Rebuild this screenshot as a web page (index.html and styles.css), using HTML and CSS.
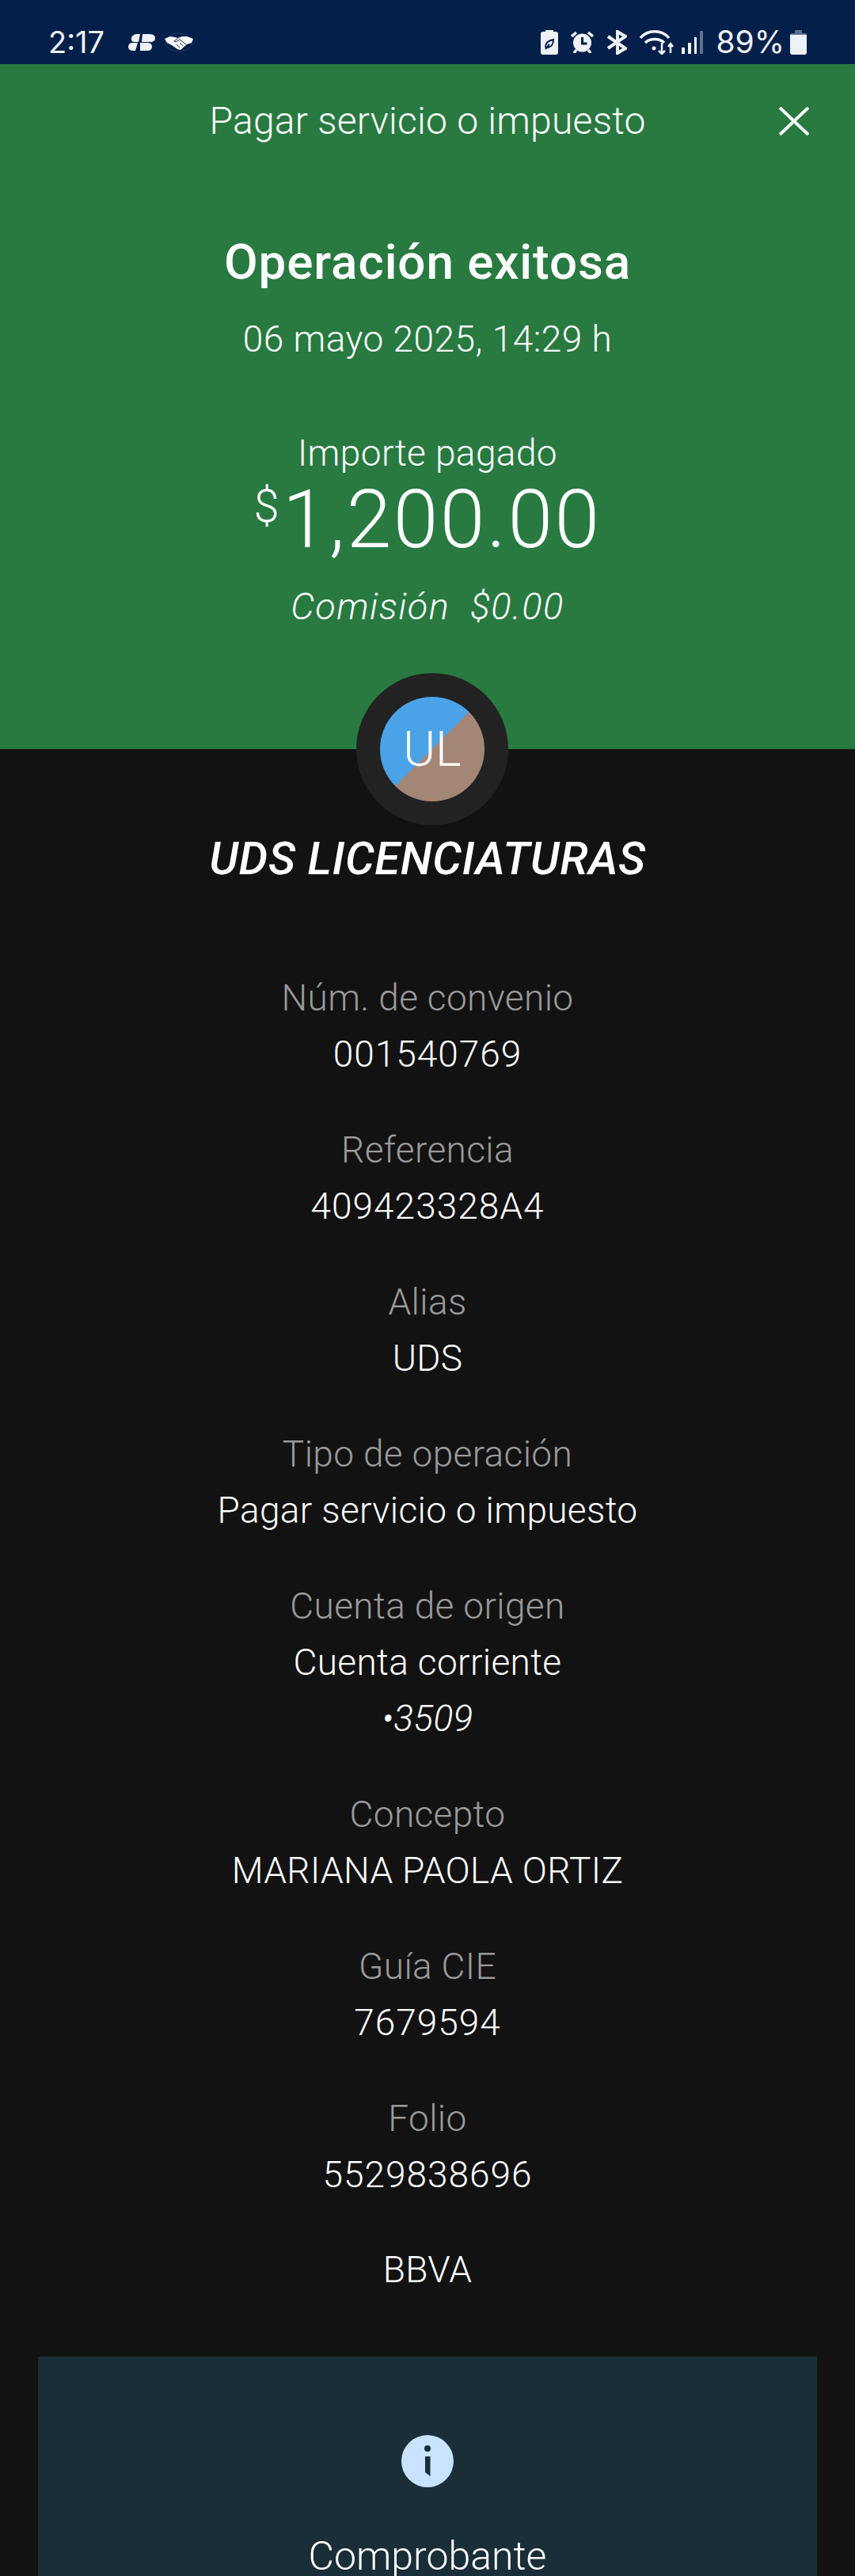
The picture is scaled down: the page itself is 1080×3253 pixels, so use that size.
FILE: index.html

```html
<!DOCTYPE html>
<html lang="es">
<head>
  <meta charset="UTF-8" />
  <meta name="viewport" content="width=device-width, initial-scale=1.0" />
  <title>Operación exitosa</title>
  <link rel="stylesheet" href="styles.css">
</head>
<body>
  <div class="statusbar">
    <div class="status-left">
      <span class="clock">2:17</span>
      <svg class="notif-a" width="34" height="21" viewBox="0 0 34 21"><path fill="#eef1f6" d="M15 0l-2 10H8Q3 10 4 5 5 0 12 0zM18 0h8q8 0 8 5t-6 5H17zM12 11L9 21H6q-6 0-6-5t6-5zM15 11h9q6 0 6 5t-6 5h-9z"/></svg>
      <svg class="notif-b" width="36" height="25" viewBox="0 0 36 25"><ellipse cx="18" cy="12.500" rx="17" ry="11.500" fill="none" stroke="#2c2f6e"/><path fill="#fff" d="M0 8l7-3 6 1 4 1 5-2 6 0 8 3-2 5-6 2-8 7-4-1-7-5-6-3z"/><path d="M17 7l-5 4 2 1 5-3 8 6M15 15l4 4M19 13l4 4" fill="none" stroke="#04204a"/></svg>
    </div>
    <div class="status-right">
      <svg width="22" height="31" viewBox="0 0 22 31"><path fill="#eef1f6" d="M6 0h10v2h3q3 0 3 3v23q0 3-3 3H3q-3 0-3-3V5q0-3 3-3h3z"/><path d="M6 22c0-6 4-9 10-10 0 6-3 10-8 10M6 24l5-6" fill="none" stroke="#04204a" stroke-width="2"/></svg>
      <svg width="29" height="28" viewBox="0 0 29 28"><circle cx="14.500" cy="15" r="11.500" fill="#eef1f6"/><path d="M14.500 8v8h6" fill="none" stroke="#04204a" stroke-width="3"/><path d="M1 7l6-5M28 7l-6-5M7 24l-3 4M22 24l3 4" stroke="#eef1f6" stroke-width="3.500"/></svg>
      <svg width="26" height="31" viewBox="0 0 26 31"><path d="M2 8l22 15-10 6V2l10 6L2 23" fill="none" stroke="#eef1f6" stroke-width="4"/></svg>
      <svg class="wifi" width="43" height="32" viewBox="0 0 43 32"><path d="M1 11C10 0 28 0 37 11M7 17c6-6 18-6 24 0" fill="none" stroke="#eef1f6" stroke-width="3.500"/><circle cx="18" cy="24" r="2.500" fill="#eef1f6"/><path d="M28 17v14m-4-4l4 4 4-4M39 30V18m-3 4l3-4 3 4" fill="none" stroke="#eef1f6" stroke-width="2.500"/></svg>
      <svg width="27" height="29" viewBox="0 0 27 29"><path fill="#eef1f6" d="M0 21h4v8H0zM8 15h4v14H8zM16 8h3v21h-3z"/><path fill="#5f7190" d="M23 0h4v29h-4z"/></svg>
      <span class="battery-text">89%</span>
      <svg class="battery" width="21" height="31" viewBox="0 0 21 31"><path fill="#5f7190" d="M6 0h9v4h4q2 0 2 2H0q0-2 2-2h4z"/><path fill="#eef1f6" d="M0 6h21v22q0 3-3 3H3q-3 0-3-3z"/></svg>
    </div>
  </div>

  <div class="hero">
    <div class="hero-top">
      <span>Pagar servicio o impuesto</span>
      <svg class="close" width="38" height="36" viewBox="0 0 38 36"><path d="M1 1l36 34M37 1L1 35" stroke="#fff" stroke-width="4" fill="none"/></svg>
    </div>
    <h1>Operación exitosa</h1>
    <p class="date">06 mayo 2025, 14:29 h</p>
    <p class="amount-label">Importe pagado</p>
    <p class="amount"><sup>$</sup>1,200.00</p>
    <p class="fee">Comisión&nbsp; $0.00</p>
  </div>

  <div class="content">
    <div class="avatar-ring">
      <div class="avatar">UL</div>
    </div>
    <h2>UDS LICENCIATURAS</h2>

    <dl class="details">
      <div class="row"><dt>Núm. de convenio</dt><dd class="num">001540769</dd></div>
      <div class="row"><dt>Referencia</dt><dd class="num">409423328A4</dd></div>
      <div class="row"><dt>Alias</dt><dd>UDS</dd></div>
      <div class="row"><dt>Tipo de operación</dt><dd>Pagar servicio o impuesto</dd></div>
      <div class="row"><dt>Cuenta de origen</dt><dd>Cuenta corriente</dd><dd class="mask">•3509</dd></div>
      <div class="row"><dt>Concepto</dt><dd>MARIANA PAOLA ORTIZ</dd></div>
      <div class="row"><dt>Guía CIE</dt><dd class="num">7679594</dd></div>
      <div class="row"><dt>Folio</dt><dd class="num">5529838696</dd></div>
      <div class="row"><dd>BBVA</dd></div>
    </dl>

    <div class="card">
      <svg class="info" width="66" height="66" viewBox="0 0 66 66"><circle cx="33" cy="33" r="33" fill="#c9e2ff"/><circle cx="33" cy="17" r="4" fill="#1a2e38"/><path d="M30 27h6.500v25l-6.500-5z" fill="#1a2e38"/></svg>
      <p class="card-title">Comprobante</p>
    </div>
  </div>
</body>
</html>
```

FILE: styles.css

```css
body {
  margin: 0;
  height: 3253px;
  overflow: hidden;
  background: #121212;
  color: #fff;
  font-family: "Roboto", "Liberation Sans", sans-serif;
  font-weight: 300;
  text-align: center;
}
p, h1, h2, dl, dd {
  margin: 0;
}

.statusbar {
  height: 81px;
  box-sizing: border-box;
  padding: 37px 61px 0 61px;
  background: #04204a;
  display: flex;
  justify-content: space-between;
  align-items: flex-start;
  color: #eef1f6;
  font-family: "Inter", sans-serif;
  font-weight: 400;
  font-size: 38px;
  line-height: 32px;
}
.status-left, .status-right {
  display: flex;
  align-items: center;
  height: 32px;
}
.notif-a {
  margin-left: 30px;
}
.notif-b {
  margin-left: 12px;
}
.status-right {
  gap: 16px;
}
.wifi {
  margin-right: -6px;
}
.battery-text {
  font-size: 39px;
}
.battery {
  margin-left: -9px;
}

.hero {
  height: 865px;
  box-sizing: border-box;
  background: #287a41;
}
.hero-top {
  position: relative;
  padding-top: 36px;
  font-size: 48px;
  line-height: 72px;
  letter-spacing: 0.25px;
}
.close {
  position: absolute;
  right: 58px;
  top: 54px;
}
h1 {
  margin-top: 104px;
  font-size: 62px;
  line-height: 76px;
  font-weight: 500;
  letter-spacing: 0.9px;
}
.date {
  margin-top: 25px;
  font-size: 46px;
  line-height: 68px;
  letter-spacing: 0.5px;
}
.amount-label {
  margin-top: 82px;
  font-size: 46px;
  line-height: 56px;
  letter-spacing: 0.4px;
}
.amount {
  margin-top: -1px;
  font-size: 102px;
  line-height: 114px;
  letter-spacing: 2.4px;
}
.amount sup {
  font-size: 58px;
  line-height: 0;
  letter-spacing: 0;
  vertical-align: 32px;
  margin-right: 4px;
}
.fee {
  margin-top: 23px;
  font-size: 47px;
  line-height: 60px;
  font-style: italic;
  letter-spacing: 1.4px;
}

.content {
  position: relative;
}
.avatar-ring {
  position: absolute;
  left: 450px;
  top: -96px;
  width: 192px;
  height: 192px;
  box-sizing: border-box;
  padding: 30px;
  border-radius: 50%;
  background: #222222;
}
.avatar {
  width: 132px;
  height: 132px;
  border-radius: 50%;
  background: linear-gradient(135deg, #4aa3e6 50%, #a38676 50%);
  font-size: 62px;
  line-height: 132px;
}
h2 {
  padding-top: 103px;
  font-size: 58px;
  line-height: 70px;
  font-weight: 500;
  font-style: italic;
  letter-spacing: 0.6px;
}
.details {
  margin-top: 105px;
  letter-spacing: 0.35px;
}
.row {
  margin-bottom: 49px;
}
dt {
  font-size: 46px;
  line-height: 72px;
  color: #9a9a9a;
}
dd {
  font-size: 46px;
  line-height: 71px;
}
.num {
  letter-spacing: 1px;
}
.mask {
  font-style: italic;
}
.card {
  margin: 74px 48px 0;
  padding-top: 99px;
  height: 400px;
  background: #1a2e38;
}
.info {
  display: block;
  margin: 0 auto;
}
.card-title {
  margin-top: 52px;
  font-size: 50px;
  line-height: 70px;
}
```
